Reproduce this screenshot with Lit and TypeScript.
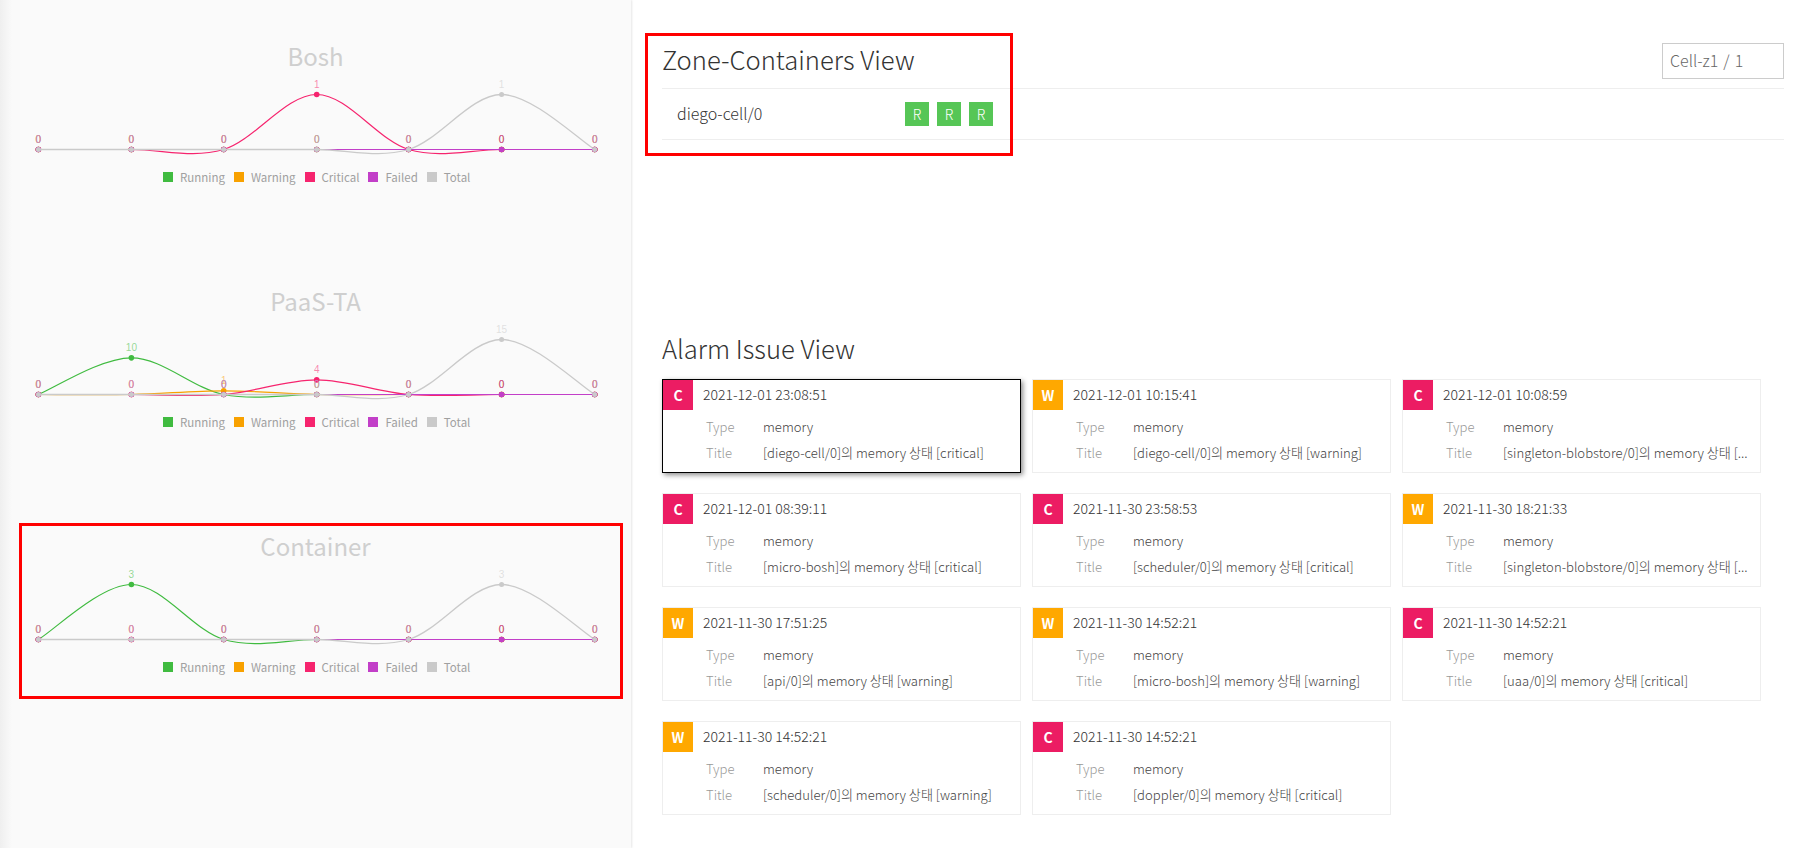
// app.ts
import { LitElement, css, html, svg } from "lit";
import { customElement, property } from "lit/decorators.js";

const FONT = css`"Noto Sans CJK KR", "Noto Sans", sans-serif`;

const COLORS: Record<string, string> = {
  Running: "#40bb40",
  Warning: "#f8a100",
  Critical: "#f6246e",
  Failed: "#c23fc8",
  Total: "#cacaca",
};

const POINT_X = [38.4, 131.4, 223.7, 316.7, 408.6, 501.6, 594.7];
const BASE_Y = 75.5;
const PEAK = 55;

type Series = Record<string, number[]>;

interface Alarm {
  level: "C" | "W";
  time: string;
  title: string;
}

const ALARMS: Alarm[] = [
  { level: "C", time: "2021-12-01 23:08:51", title: "[diego-cell/0]의 memory 상태 [critical]" },
  { level: "W", time: "2021-12-01 10:15:41", title: "[diego-cell/0]의 memory 상태 [warning]" },
  { level: "C", time: "2021-12-01 10:08:59", title: "[singleton-blobstore/0]의 memory 상태 [..." },
  { level: "C", time: "2021-12-01 08:39:11", title: "[micro-bosh]의 memory 상태 [critical]" },
  { level: "C", time: "2021-11-30 23:58:53", title: "[scheduler/0]의 memory 상태 [critical]" },
  { level: "W", time: "2021-11-30 18:21:33", title: "[singleton-blobstore/0]의 memory 상태 [..." },
  { level: "W", time: "2021-11-30 17:51:25", title: "[api/0]의 memory 상태 [warning]" },
  { level: "W", time: "2021-11-30 14:52:21", title: "[micro-bosh]의 memory 상태 [warning]" },
  { level: "C", time: "2021-11-30 14:52:21", title: "[uaa/0]의 memory 상태 [critical]" },
  { level: "W", time: "2021-11-30 14:52:21", title: "[scheduler/0]의 memory 상태 [warning]" },
  { level: "C", time: "2021-11-30 14:52:21", title: "[doppler/0]의 memory 상태 [critical]" },
];

@customElement("status-chart")
export class StatusChart extends LitElement {
  static styles = css`
    :host {
      display: block;
      height: 245px;
      font-family: ${FONT};
    }
    .title {
      height: 35px;
      margin: 0;
      padding-top: 39px;
      text-align: center;
      font-size: 24px;
      line-height: 34px;
      font-weight: 400;
      color: #cfcfcf;
    }
    svg {
      display: block;
    }
    .val {
      font-size: 10px;
      font-family: "Liberation Sans", sans-serif;
      text-anchor: middle;
    }
    .legend {
      display: flex;
      padding: 5px 0 0 163px;
      font-size: 11.5px;
      line-height: 16px;
      color: #a0a0a0;
      font-weight: 400;
    }
    .item {
      display: flex;
      align-items: center;
      gap: 7px;
      margin-right: 9px;
    }
    .swatch {
      width: 10px;
      height: 10px;
    }
  `;

  @property({ type: String }) name = "";
  @property({ type: Number }) top = 0;
  @property({ type: Object }) series: Series = {};

  // catmull-rom through the points, same shape as the spline in the chart lib
  private _path(values: number[]) {
    const pts = values.map((v, i) => [POINT_X[i], this._y(v)]);
    let d = `M${pts[0][0]},${pts[0][1]}`;
    for (let i = 0; i < pts.length - 1; i++) {
      const p0 = pts[Math.max(i - 1, 0)];
      const p1 = pts[i];
      const p2 = pts[i + 1];
      const p3 = pts[Math.min(i + 2, pts.length - 1)];
      const c1x = p1[0] + (p2[0] - p0[0]) / 6;
      const c1y = p1[1] + (p2[1] - p0[1]) / 6;
      const c2x = p2[0] - (p3[0] - p1[0]) / 6;
      const c2y = p2[1] - (p3[1] - p1[1]) / 6;
      d += ` C${c1x},${c1y} ${c2x},${c2y} ${p2[0]},${p2[1]}`;
    }
    return d;
  }

  private _y(v: number) {
    return BASE_Y - (v / this.top) * PEAK;
  }

  render() {
    return html`
      <h3 class="title">${this.name}</h3>
      <svg width="632" height="90" viewBox="0 0 632 90">
        ${Object.entries(this.series).map(
          ([name, values]) => svg`
            <path
              d=${this._path(values)}
              fill="none"
              stroke=${COLORS[name]}
              stroke-width=${name === "Total" ? 1.3 : 1.2}
            />
            ${values.map(
              (v, i) => svg`
                <circle cx=${POINT_X[i]} cy=${this._y(v)} r=${name === "Total" ? 2.5 : 2.8} fill=${COLORS[name]} />
                <text class="val" x=${POINT_X[i]} y=${this._y(v) - 7} fill=${COLORS[name]} fill-opacity="0.55">${v}</text>
              `
            )}
          `
        )}
      </svg>
      <div class="legend">
        ${Object.keys(COLORS).map(
          (name) => html`
            <div class="item">
              <span class="swatch" style="background:${COLORS[name]}"></span>${name}
            </div>
          `
        )}
      </div>
    `;
  }
}

@customElement("alarm-card")
export class AlarmCard extends LitElement {
  static styles = css`
    :host {
      display: block;
      font-family: ${FONT};
    }
    .card {
      box-sizing: border-box;
      height: 94px;
      border: 1px solid #eee;
      background: #fff;
    }
    .card.active {
      border-color: #000;
      box-shadow: 2px 2px 5px rgba(0, 0, 0, 0.45);
    }
    .head {
      display: flex;
      align-items: center;
      height: 30px;
      gap: 10px;
      font-size: 14px;
      font-weight: 300;
      color: #333;
    }
    .time {
      padding-bottom: 2px;
    }
    .badge {
      width: 30px;
      height: 30px;
      line-height: 30px;
      text-align: center;
      font-size: 14px;
      font-weight: 700;
      color: #fff;
    }
    .badge.C {
      background: #ec1c63;
    }
    .badge.W {
      background: #ffa800;
    }
    .rows {
      display: grid;
      grid-template-columns: 57px 250px;
      grid-auto-rows: 26px;
      padding: 4px 0 0 43px;
      font-size: 13.1px;
      line-height: 26px;
      font-weight: 300;
    }
    .label {
      color: #999;
    }
    .value {
      color: #444;
      white-space: nowrap;
    }
  `;

  @property({ type: Object }) alarm!: Alarm;
  @property({ type: Boolean }) active = false;

  render() {
    return html`
      <div class="card ${this.active ? "active" : ""}">
        <div class="head">
          <span class="badge ${this.alarm.level}">${this.alarm.level}</span>
          <span class="time">${this.alarm.time}</span>
        </div>
        <div class="rows">
          <span class="label">Type</span><span class="value">memory</span>
          <span class="label">Title</span><span class="value">${this.alarm.title}</span>
        </div>
      </div>
    `;
  }
}

@customElement("app-root")
export class AppRoot extends LitElement {
  static styles = css`
    :host {
      display: flex;
      position: relative;
      width: 1793px;
      height: 848px;
      overflow: hidden;
      background: #fff;
      font-family: ${FONT};
    }
    .side {
      flex: none;
      width: 631px;
      height: 848px;
      background: linear-gradient(to right, #efefef 0, #fafafa 12px);
      box-shadow: 1px 0 2px rgba(0, 0, 0, 0.1);
    }
    .main {
      flex: none;
      box-sizing: border-box;
      width: 1162px;
      padding: 0 9px 0 31px;
    }
    .zone-head {
      display: flex;
      justify-content: space-between;
      align-items: flex-end;
      height: 88px;
      border-bottom: 1px solid #eee;
    }
    h2 {
      margin: 0;
      font-size: 25.6px;
      line-height: 38px;
      font-weight: 200;
      color: #333;
    }
    .zone-head h2 {
      padding-bottom: 10px;
    }
    .select {
      box-sizing: border-box;
      width: 122px;
      height: 36px;
      margin-bottom: 9px;
      padding-left: 7px;
      border: 1px solid #ccc;
      font-size: 16px;
      line-height: 32px;
      word-spacing: 1.5px;
      font-weight: 300;
      color: #666;
    }
    .zone-row {
      display: flex;
      align-items: center;
      box-sizing: border-box;
      height: 51px;
      padding-left: 15px;
      border-bottom: 1px solid #eee;
      font-size: 16px;
      font-weight: 300;
      color: #333;
    }
    .zone-row .name {
      width: 228px;
      padding-bottom: 2px;
    }
    .state {
      width: 24px;
      height: 24px;
      margin-right: 8px;
      background: #56c656;
      color: #fff;
      text-align: center;
      font-size: 14px;
      line-height: 24px;
    }
    .alarm-title {
      margin-top: 189px;
      height: 50px;
    }
    .grid {
      display: grid;
      grid-template-columns: repeat(3, 359px);
      gap: 20px 11px;
    }
    .mark {
      position: absolute;
      box-sizing: border-box;
      border: 3px solid #f00;
    }
    .mark.zone {
      left: 645px;
      top: 33px;
      width: 368px;
      height: 123px;
    }
    .mark.container {
      left: 19px;
      top: 523px;
      width: 604px;
      height: 176px;
    }
  `;

  private charts: { name: string; top: number; series: Series }[] = [
    {
      name: "Bosh",
      top: 1,
      series: {
        Running: [0, 0, 0, 0, 0, 0, 0],
        Warning: [0, 0, 0, 0, 0, 0, 0],
        Critical: [0, 0, 0, 1, 0, 0, 0],
        Failed: [0, 0, 0, 0, 0, 0, 0],
        Total: [0, 0, 0, 0, 0, 1, 0],
      },
    },
    {
      name: "PaaS-TA",
      top: 15,
      series: {
        Running: [0, 10, 0, 0, 0, 0, 0],
        Warning: [0, 0, 1, 0, 0, 0, 0],
        Critical: [0, 0, 0, 4, 0, 0, 0],
        Failed: [0, 0, 0, 0, 0, 0, 0],
        Total: [0, 0, 0, 0, 0, 15, 0],
      },
    },
    {
      name: "Container",
      top: 3,
      series: {
        Running: [0, 3, 0, 0, 0, 0, 0],
        Warning: [0, 0, 0, 0, 0, 0, 0],
        Critical: [0, 0, 0, 0, 0, 0, 0],
        Failed: [0, 0, 0, 0, 0, 0, 0],
        Total: [0, 0, 0, 0, 0, 3, 0],
      },
    },
  ];

  render() {
    return html`
      <aside class="side">
        ${this.charts.map(
          (c) => html`<status-chart .name=${c.name} .top=${c.top} .series=${c.series}></status-chart>`
        )}
      </aside>
      <main class="main">
        <div class="zone-head">
          <h2>Zone-Containers View</h2>
          <div class="select">Cell-z1 / 1</div>
        </div>
        <div class="zone-row">
          <span class="name">diego-cell/0</span>
          <span class="state">R</span><span class="state">R</span><span class="state">R</span>
        </div>
        <h2 class="alarm-title">Alarm Issue View</h2>
        <div class="grid">
          ${ALARMS.map(
            (a, i) => html`<alarm-card .alarm=${a} ?active=${i === 0}></alarm-card>`
          )}
        </div>
      </main>
      <div class="mark zone"></div>
      <div class="mark container"></div>
    `;
  }
}
